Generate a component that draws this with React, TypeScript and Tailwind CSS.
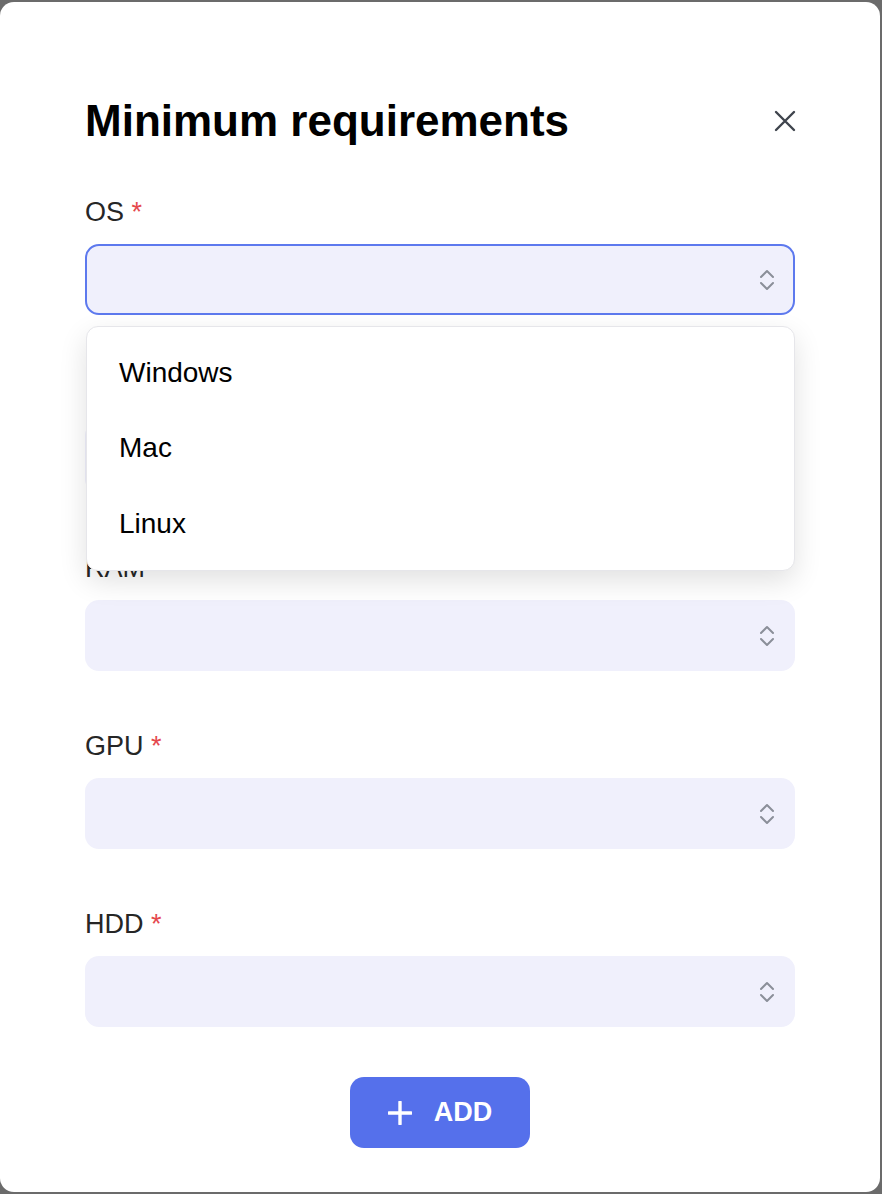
import { useState } from "react"

const campos = ["OS", "CPU", "RAM", "GPU", "HDD"]
const opcoes = ["Windows", "Mac", "Linux"]

function Chevrons() {
  return (
    <svg width="16" height="24" viewBox="0 0 16 24" fill="none" stroke="#8b8f99" strokeWidth="2" strokeLinecap="round" strokeLinejoin="round">
      <path d="M2 9l6-6 6 6" />
      <path d="M2 15l6 6 6-6" />
    </svg>
  )
}

export default function App() {
  const [aberto] = useState("OS")

  return (
    <div className="min-h-screen bg-[#6b6b6b] pt-[2px] font-['Liberation_Sans',Arial,sans-serif]">
      <div className="w-[880px] bg-white rounded-[14px] px-[85px] pt-[92px] pb-[44px]">
        {/* Header */}
        <div className="flex items-center justify-between">
          <h1 className="text-[44px] leading-[53px] font-bold text-black">Minimum requirements</h1>
          <button className="w-[24px] h-[24px] flex items-center justify-center -mr-[2px]">
            <svg width="24" height="24" viewBox="0 0 24 24" fill="none" stroke="#3f444d" strokeWidth="2.4" strokeLinecap="round">
              <path d="M3 3l18 18M21 3L3 21" />
            </svg>
          </button>
        </div>

        {/* Fields */}
        <div className="mt-[43px] flex flex-col gap-[53px]">
          {campos.map((campo, i) => (
            <div key={campo}>
              {/* the CPU row sits under the open list */}
              <label
                className={`block pt-[3px] text-[27px] leading-[39px] text-[#262626] ${
                  i === 1 ? "invisible" : ""
                }`}
              >
                {campo} <span className="text-[#e5484d]">*</span>
              </label>
              <div className="relative mt-[12px]">
                <div
                  className={`h-[71px] rounded-[14px] bg-[#f0f0fc] flex items-center justify-end pr-[18px] border-2 ${
                    aberto === campo ? "border-[#5d79ee]" : "border-transparent"
                  }`}
                >
                  <Chevrons />
                </div>
                {aberto === campo && (
                  <div className="absolute z-10 left-[1px] right-0 top-[82px] bg-white border border-[#e6e6ea] rounded-[12px] py-2 shadow-[0_10px_28px_rgba(0,0,0,0.12)]">
                    {opcoes.map((op) => (
                      <div key={op} className="h-[75.5px] flex items-center px-[32px] text-[28px] text-black">
                        {op}
                      </div>
                    ))}
                  </div>
                )}
              </div>
            </div>
          ))}
        </div>

        {/* Action */}
        <div className="mt-[50px] flex justify-center">
          <button className="h-[71px] px-[38px] rounded-[14px] bg-[#5570eb] text-white flex items-center gap-[22px] text-[27px] font-bold">
            <svg width="24" height="24" viewBox="0 0 24 24" fill="none" stroke="white" strokeWidth="3.4" strokeLinecap="round">
              <path d="M12 1v22M1 12h22" />
            </svg>
            ADD
          </button>
        </div>
      </div>
    </div>
  )
}
